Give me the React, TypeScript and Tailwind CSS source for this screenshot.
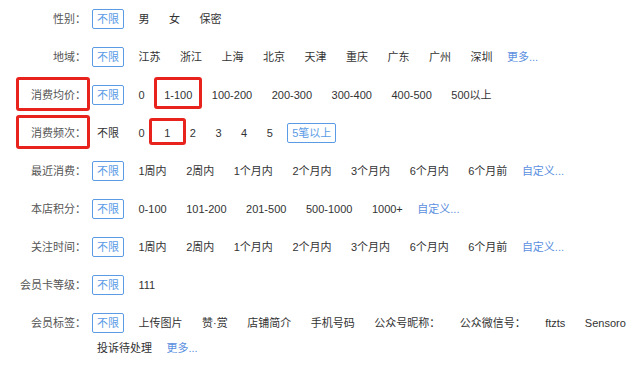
import type { ReactNode } from "react";

type Opt = { text: string; active?: boolean; link?: boolean; mark?: "wide" | "narrow" };

type Row = { label: string; mark?: boolean; options: Opt[] };

const timeOpts = (): Opt[] => [
  { text: "不限", active: true },
  { text: "1周内" },
  { text: "2周内" },
  { text: "1个月内" },
  { text: "2个月内" },
  { text: "3个月内" },
  { text: "6个月内" },
  { text: "6个月前" },
  { text: "自定义...", link: true },
];

const rows: Row[] = [
  { label: "性别：", options: [{ text: "不限", active: true }, { text: "男" }, { text: "女" }, { text: "保密" }] },
  {
    label: "地域：",
    options: [
      { text: "不限", active: true },
      ...["江苏", "浙江", "上海", "北京", "天津", "重庆", "广东", "广州", "深圳"].map((t) => ({ text: t })),
      { text: "更多...", link: true },
    ],
  },
  {
    label: "消费均价：",
    mark: true,
    options: [
      { text: "不限", active: true },
      { text: "0" },
      { text: "1-100", mark: "wide" },
      { text: "100-200" },
      { text: "200-300" },
      { text: "300-400" },
      { text: "400-500" },
      { text: "500以上" },
    ],
  },
  {
    label: "消费频次：",
    mark: true,
    options: [
      { text: "不限" },
      { text: "0" },
      { text: "1", mark: "narrow" },
      { text: "2" },
      { text: "3" },
      { text: "4" },
      { text: "5" },
      { text: "5笔以上", active: true },
    ],
  },
  { label: "最近消费：", options: timeOpts() },
  {
    label: "本店积分：",
    options: [
      { text: "不限", active: true },
      { text: "0-100" },
      { text: "101-200" },
      { text: "201-500" },
      { text: "500-1000" },
      { text: "1000+" },
      { text: "自定义...", link: true },
    ],
  },
  { label: "关注时间：", options: timeOpts() },
  { label: "会员卡等级：", options: [{ text: "不限", active: true }, { text: "111" }] },
  {
    label: "会员标签：",
    options: [
      { text: "不限", active: true },
      ...["上传图片", "赞·赏", "店铺简介", "手机号码", "公众号昵称：", "公众微信号：", "ftzts", "Sensoro", "投诉待处理"].map(
        (t) => ({ text: t })
      ),
      { text: "更多...", link: true },
    ],
  },
];

function RedBox({ className }: { className: string }) {
  return <span className={`pointer-events-none absolute rounded-[3px] border-[3px] border-[#e8231e] ${className}`} />;
}

function Option({ opt }: { opt: Opt }) {
  if (opt.link) {
    return <span className="h-[20px] leading-[20px] text-[#5b8fe0] whitespace-nowrap">{opt.text}</span>;
  }
  let mark: ReactNode = null;
  if (opt.mark === "wide") mark = <RedBox className="-left-[6px] -right-[6px] -top-[9px] -bottom-[5px]" />;
  if (opt.mark === "narrow") mark = <RedBox className="-left-[11px] -right-[12px] -top-[6px] -bottom-[3px]" />;
  return (
    <span
      className={`relative h-[20px] px-[4px] border leading-[18px] whitespace-nowrap rounded-[2px] ${
        opt.active ? "border-[#5b9be6] text-[#5b9be6]" : "border-transparent text-[#333]"
      }`}
    >
      {opt.text}
      {mark}
    </span>
  );
}

export default function App() {
  return (
    <div
      className="w-[640px] h-[369px] bg-white pt-[9px] text-[11px] overflow-hidden"
      style={{ fontFamily: '"Liberation Sans", "Noto Sans CJK SC", sans-serif' }}
    >
      {rows.map((row) => (
        <div key={row.label} className="flex items-start mb-[18px]">
          <div className="relative w-[86px] shrink-0 h-[20px] leading-[20px] text-right text-[#555]">
            {row.label}
            {row.mark && <RedBox className="left-[16px] -right-[4px] -top-[8px] -bottom-[6px]" />}
          </div>
          <div className="ml-[6px] flex-1 flex flex-wrap gap-x-[9.5px] gap-y-[5px]">
            {row.options.map((o, i) => (
              <Option key={i} opt={o} />
            ))}
          </div>
        </div>
      ))}
    </div>
  );
}
